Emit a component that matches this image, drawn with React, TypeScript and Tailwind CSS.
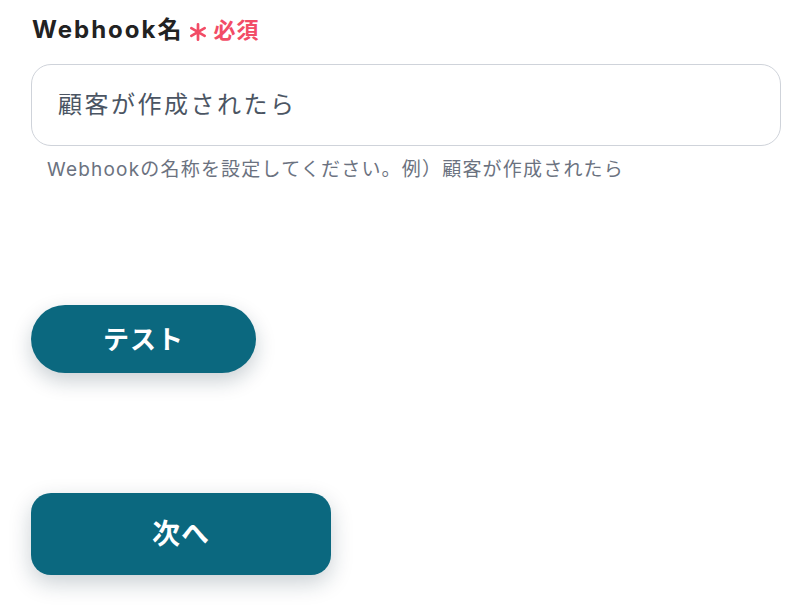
export default function App() {
  return (
    <div
      className="min-h-[612px] w-[807px] bg-white"
      style={{ fontFamily: '"Inter", "Noto Sans CJK JP", sans-serif' }}
    >
      <div className="pl-[31px] pr-[26px] pt-[14px]">
        <label className="flex items-center pl-[1px]">
          <span className="text-[24px] font-bold leading-[32px] tracking-[2px] text-[#222222]">Webhook名</span>
          <svg viewBox="0 0 20 20" className="ml-[6px] mt-[3px] h-[18px] w-[18px] text-[#f24c66]" fill="none" stroke="currentColor" strokeWidth="3" strokeLinecap="round">
            <path d="M10 1.5v17M2.6 5.75l14.8 8.5M2.6 14.25l14.8-8.5" />
          </svg>
          <span className="ml-[6px] text-[22px] font-bold leading-[32px] tracking-[1px] text-[#f24c66]">必須</span>
        </label>
        <div className="mt-[18px] flex h-[82px] items-center rounded-[20px] border border-[#cfd3da] px-[26px]">
          <span className="text-[24px] tracking-[2.5px] text-[#4b5563]">顧客が作成されたら</span>
        </div>
        <p className="mt-[9px] pl-[16px] text-[19px] leading-[30px] tracking-[1.2px] text-[#6b7280]">
          Webhookの名称を設定してください。例）顧客が作成されたら
        </p>
        <button className="mt-[120px] flex h-[68px] w-[225px] items-center justify-center rounded-full bg-[#0b687f] text-[26px] font-bold tracking-[1px] text-white shadow-[0_8px_20px_rgba(15,40,60,0.22)]">
          テスト
        </button>
        <button className="mt-[120px] flex h-[82px] w-[300px] items-center justify-center rounded-[20px] bg-[#0b687f] text-[28px] font-bold tracking-[1px] text-white shadow-[0_8px_22px_rgba(15,40,60,0.22)]">
          次へ
        </button>
      </div>
    </div>
  );
}
